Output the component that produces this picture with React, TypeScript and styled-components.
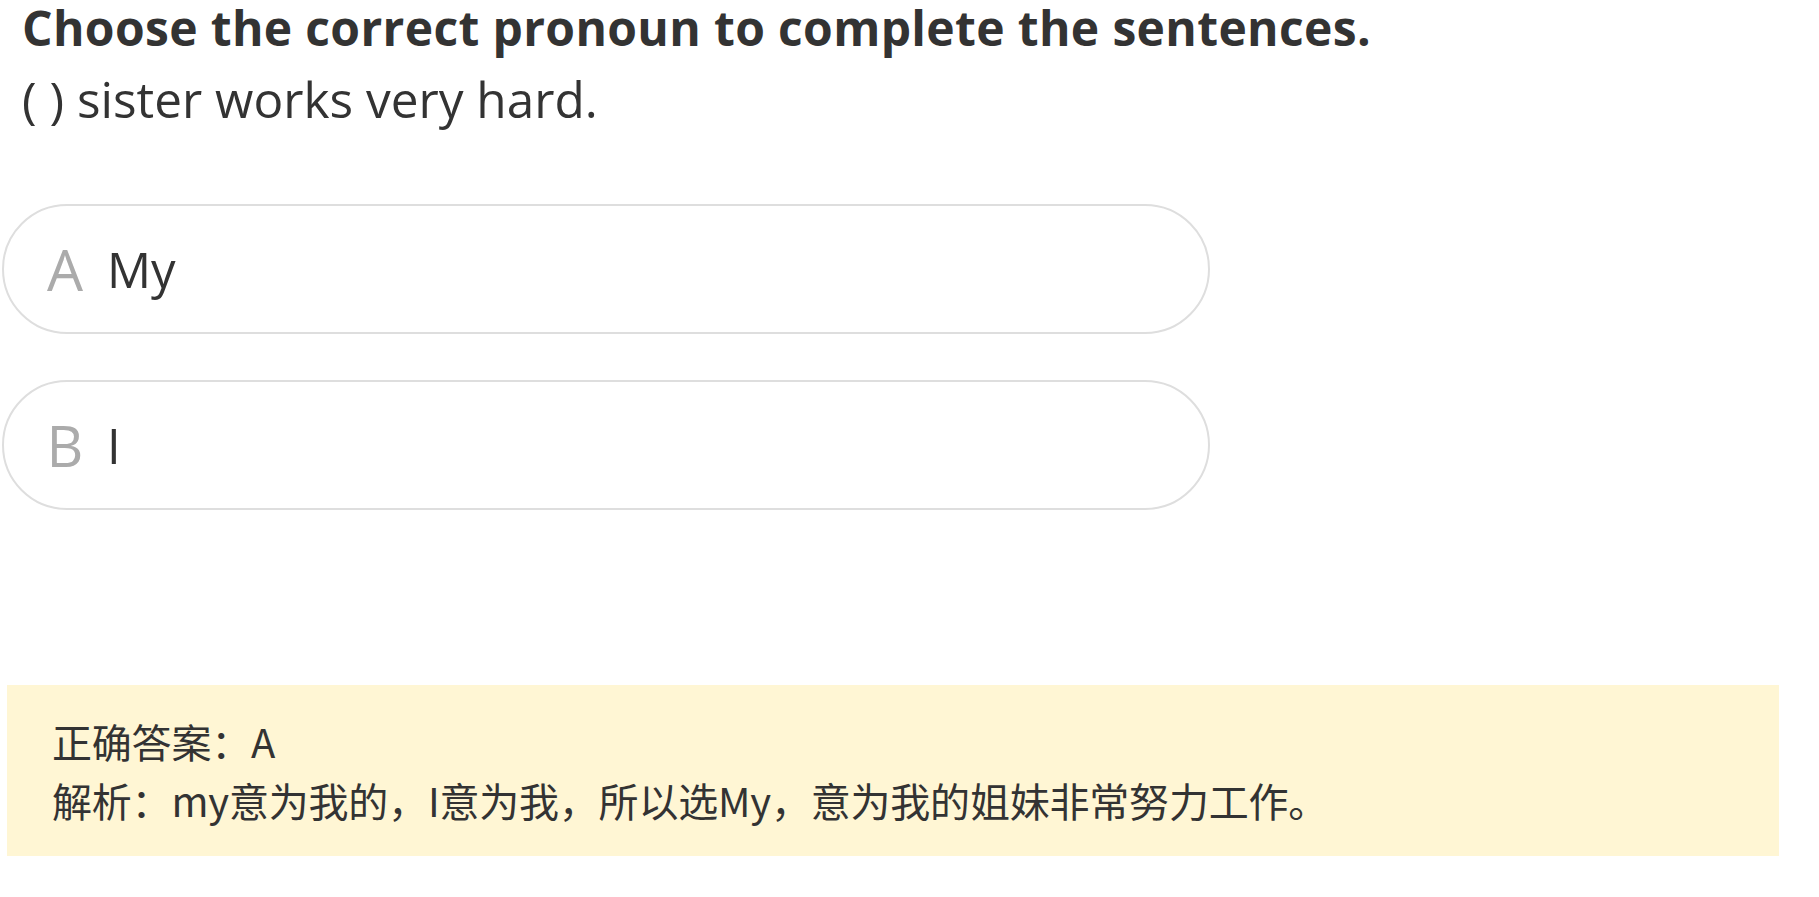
import React from "react";
import styled, { createGlobalStyle } from "styled-components";

const GlobalStyle = createGlobalStyle`
  html, body {
    margin: 0;
    padding: 0;
    background: #ffffff;
  }
  body {
    font-family: "Open Sans", "Noto Sans CJK SC", sans-serif;
    color: #333333;
  }
`;

const Page = styled.div`
  display: flex;
  flex-direction: column;
  width: 1819px;
  min-height: 897px;
`;

const Title = styled.h1`
  margin: 0;
  padding-left: 22px;
  font-size: 48px;
  line-height: 56px;
  letter-spacing: 0.35px;
  font-weight: 700;
  color: #333333;
`;

const Question = styled.p`
  margin: 15px 0 0;
  padding-left: 22px;
  font-size: 49.5px;
  line-height: 57px;
  font-weight: 400;
  color: #333333;
`;

const OptionList = styled.div`
  display: flex;
  flex-direction: column;
  gap: 46px;
  margin: 76px 0 0 2px;
  width: 1208px;
`;

const Option = styled.div`
  display: flex;
  align-items: center;
  box-sizing: border-box;
  height: 130px;
  padding-left: 41px;
  border: 2px solid #dedede;
  border-radius: 65px;
  background: #ffffff;
`;

const OptionLetter = styled.span`
  width: 40px;
  text-align: center;
  font-size: 57px;
  line-height: 1;
  color: #ababab;
`;

const OptionText = styled.span`
  margin-left: 22px;
  font-size: 49px;
  line-height: 1;
  color: #333333;
`;

const AnswerBox = styled.div`
  display: flex;
  flex-direction: column;
  box-sizing: border-box;
  margin: 175px 0 0 7px;
  width: 1772px;
  height: 171px;
  padding: 27px 45px;
  background: #fff6d4;
  font-family: "Noto Sans CJK SC", sans-serif;
  font-size: 40px;
  line-height: 59px;
  letter-spacing: -0.2px;
  color: #333333;
`;

const AnswerLine = styled.div`
  white-space: nowrap;
`;

const options = [
  { letter: "A", text: "My" },
  { letter: "B", text: "I" },
];

export default function App() {
  return (
    <>
      <GlobalStyle />
      <Page>
        <Title>Choose the correct pronoun to complete the sentences.</Title>
        <Question>( ) sister works very hard.</Question>
        <OptionList>
          {options.map((o) => (
            <Option key={o.letter}>
              <OptionLetter>{o.letter}</OptionLetter>
              <OptionText>{o.text}</OptionText>
            </Option>
          ))}
        </OptionList>
        <AnswerBox>
          <AnswerLine>正确答案：A</AnswerLine>
          <AnswerLine>解析：my意为我的，I意为我，所以选My，意为我的姐妹非常努力工作。</AnswerLine>
        </AnswerBox>
      </Page>
    </>
  );
}
